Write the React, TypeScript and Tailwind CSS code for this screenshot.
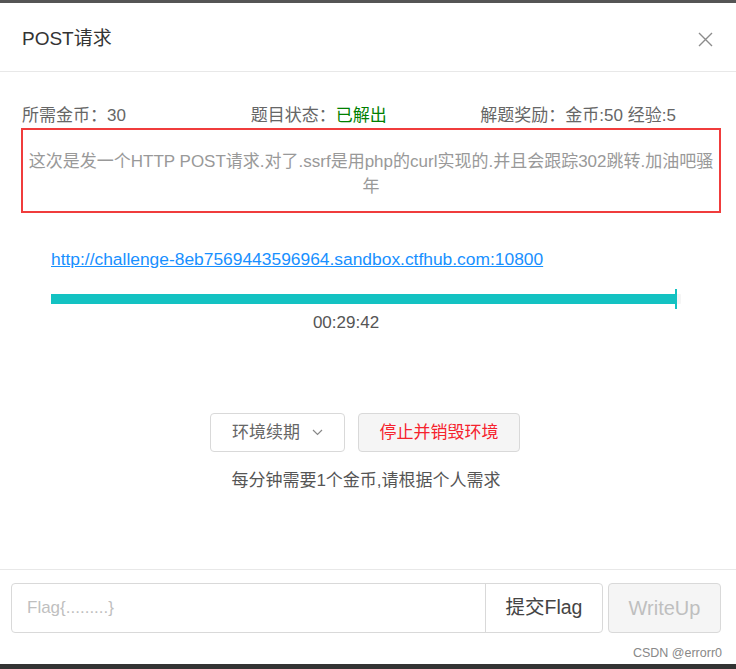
import React from "react";

const font = { fontFamily: '"Liberation Sans", "Noto Sans CJK SC", sans-serif' };

export default function App() {
  return (
    <div className="w-[736px] h-[669px] bg-white flex flex-col overflow-hidden" style={font}>
      <div className="h-[3px] bg-[#555]" />
      {/* header */}
      <div className="h-[69px] border-b border-[#e8e8e8] flex items-center justify-between pl-[22px] pr-[23px] pt-[4px]">
        <span className="text-[19px] text-[#333]">POST请求</span>
        <svg width="15" height="15" viewBox="0 0 15 15" className="mt-[1px]">
          <path d="M1 1 L14 14 M14 1 L1 14" stroke="#8c8c8c" strokeWidth="1.4" />
        </svg>
      </div>
      {/* info row */}
      <div className="mt-[33px] grid grid-cols-3 px-[22px] text-[17px] text-[#666] leading-[22px]">
        <div>所需金币：30</div>
        <div className="ml-[-2px]">题目状态：<span className="text-[#008000]">已解出</span></div>
        <div className="ml-[-3px]">解题奖励：金币:50 经验:5</div>
      </div>
      {/* description box */}
      <div className="mt-[1px] ml-[21px] w-[700px] h-[85px] border-2 border-[#f03c3c] flex flex-col items-center justify-center text-[17px] text-[#999] leading-[25px] pt-[7px]">
        <div className="whitespace-nowrap">这次是发一个HTTP POST请求.对了.ssrf是用php的curl实现的.并且会跟踪302跳转.加油吧骚</div>
        <div>年</div>
      </div>
      {/* link */}
      <div className="mt-[35px] pl-[51px] leading-[22px]">
        <a className="text-[17.4px] text-[#1890ff] underline">
          http://challenge-8eb7569443596964.sandbox.ctfhub.com:10800
        </a>
      </div>
      {/* progress */}
      <div className="mt-[18px] ml-[51px] w-[630px] h-[20px] relative flex items-center">
        <div className="w-full h-[10px] bg-[#f5f5f5] rounded-[1px] flex">
          <div className="w-[624px] h-full bg-[#13c2c2]" />
        </div>
        <div className="absolute left-[624px] top-0 w-[2px] h-[20px] bg-[#13c2c2]" />
      </div>
      <div className="mt-[3px] w-[692px] text-center text-[17px] text-[#555] leading-[22px]">00:29:42</div>
      {/* buttons */}
      <div className="mt-[79px] flex justify-center gap-[13px] pr-[6px]">
        <button className="w-[135px] h-[39px] border border-[#d9d9d9] rounded-[4px] bg-white text-[17px] text-[#666] flex items-center justify-center gap-[12px]">
          <span>环境续期</span>
          <svg width="11" height="7" viewBox="0 0 11 7"><path d="M1 1 L5.5 5.5 L10 1" fill="none" stroke="#888" strokeWidth="1.2" /></svg>
        </button>
        <button className="w-[162px] h-[39px] border border-[#d9d9d9] rounded-[4px] bg-[#f5f5f5] text-[17px] text-[#f5222d] flex items-center justify-center">
          停止并销毁环境
        </button>
      </div>
      <div className="mt-[18px] w-[732px] text-center text-[17px] text-[#555] leading-[22px]">每分钟需要1个金币,请根据个人需求</div>
      {/* footer */}
      <div className="mt-[77px] border-t border-[#e8e8e8] pt-[13px] pl-[11px] flex">
        <div className="w-[592px] h-[50px] border border-[#d9d9d9] rounded-[4px] flex">
          <div className="flex-1 flex items-center pl-[15px] text-[17px] text-[#bfbfbf]">Flag{'{'}.........{'}'}</div>
          <div className="w-[117px] border-l border-[#d9d9d9] flex items-center justify-center text-[19.5px] text-[#444]">提交Flag</div>
        </div>
        <div className="ml-[5px] w-[113px] h-[50px] border border-[#d9d9d9] rounded-[4px] bg-[#f5f5f5] flex items-center justify-center text-[20px] text-[#bfbfbf]">WriteUp</div>
      </div>
      <div className="mt-[12px] pr-[14px] text-right text-[12.5px] text-[#888] leading-[16px]">CSDN @errorr0</div>
      <div className="mt-auto h-[5px] bg-[#333]" />
    </div>
  );
}
